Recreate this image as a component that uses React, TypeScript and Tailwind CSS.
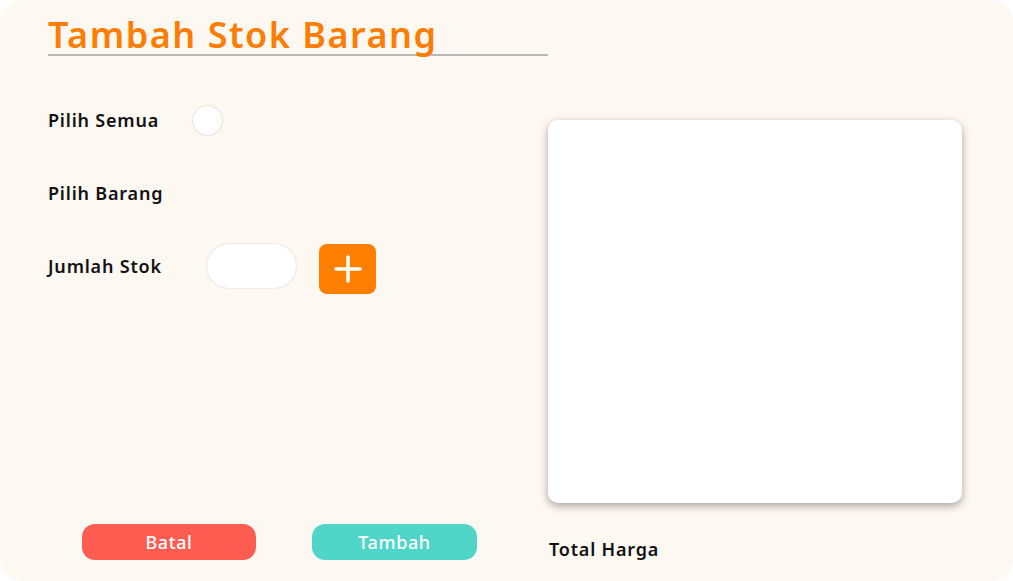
import React from "react";

export default function App() {
  const font = { fontFamily: "'Noto Sans', Lato, sans-serif" };
  return (
    <div className="w-[1013px] h-[581px] bg-white" style={font}>
      <div className="w-[1013px] h-[581px] rounded-[22px] bg-[#fef8f2] flex">
        {/* left column */}
        <div className="w-[548px] pl-[48px] flex flex-col">
          <div className="pt-[15px] border-b-2 border-[#b9b9b9] h-[56px]">
            <h1 className="text-[36px] leading-[40px] font-semibold text-[#ff7d00] tracking-[1.5px]">
              Tambah Stok Barang
            </h1>
          </div>
          <div className="flex items-center h-[30px] mt-[49px]">
            <span className="w-[145px] text-[18px] font-semibold text-[#111] tracking-[0.8px]">Pilih Semua</span>
            <span className="w-[29px] h-[29px] rounded-full bg-white shadow-[0_0_2px_rgba(0,0,0,0.25)]"></span>
          </div>
          <div className="flex items-center h-[30px] mt-[43px]">
            <span className="text-[18px] font-semibold text-[#111] tracking-[0.8px]">Pilih Barang</span>
          </div>
          <div className="flex items-center h-[52px] mt-[32px]">
            <span className="w-[159px] text-[18px] font-semibold text-[#111] tracking-[0.8px]">Jumlah Stok</span>
            <input className="w-[89px] h-[44px] rounded-full bg-white shadow-[0_0_2px_rgba(0,0,0,0.2)] outline-none" />
            <button className="ml-[23px] w-[57px] h-[50px] rounded-[8px] bg-[#ff7f00] flex items-center justify-center mt-[6px]">
              <svg width="30" height="30" viewBox="0 0 30 30">
                <path d="M15 3v24M3 15h24" stroke="white" strokeWidth="3.5" strokeLinecap="round" />
              </svg>
            </button>
          </div>
          <div className="flex-1" />
          <div className="flex pl-[34px] gap-[56px] mb-[21px]">
            <button className="w-[174px] h-[36px] rounded-[13px] bg-[#ff5c52] text-white text-[18px] font-medium tracking-[0.6px]">
              Batal
            </button>
            <button className="w-[165px] h-[36px] rounded-[13px] bg-[#4fd6c9] text-white text-[18px] font-medium tracking-[0.6px]">
              Tambah
            </button>
          </div>
        </div>
        {/* right column */}
        <div className="flex flex-col pt-[120px]">
          <div className="w-[414px] h-[383px] rounded-[10px] bg-white shadow-[0_3px_8px_rgba(0,0,0,0.35)]"></div>
          <div className="mt-[33px] pl-[1px] text-[18px] font-semibold text-[#111] tracking-[0.8px]">Total Harga</div>
        </div>
      </div>
    </div>
  );
}
